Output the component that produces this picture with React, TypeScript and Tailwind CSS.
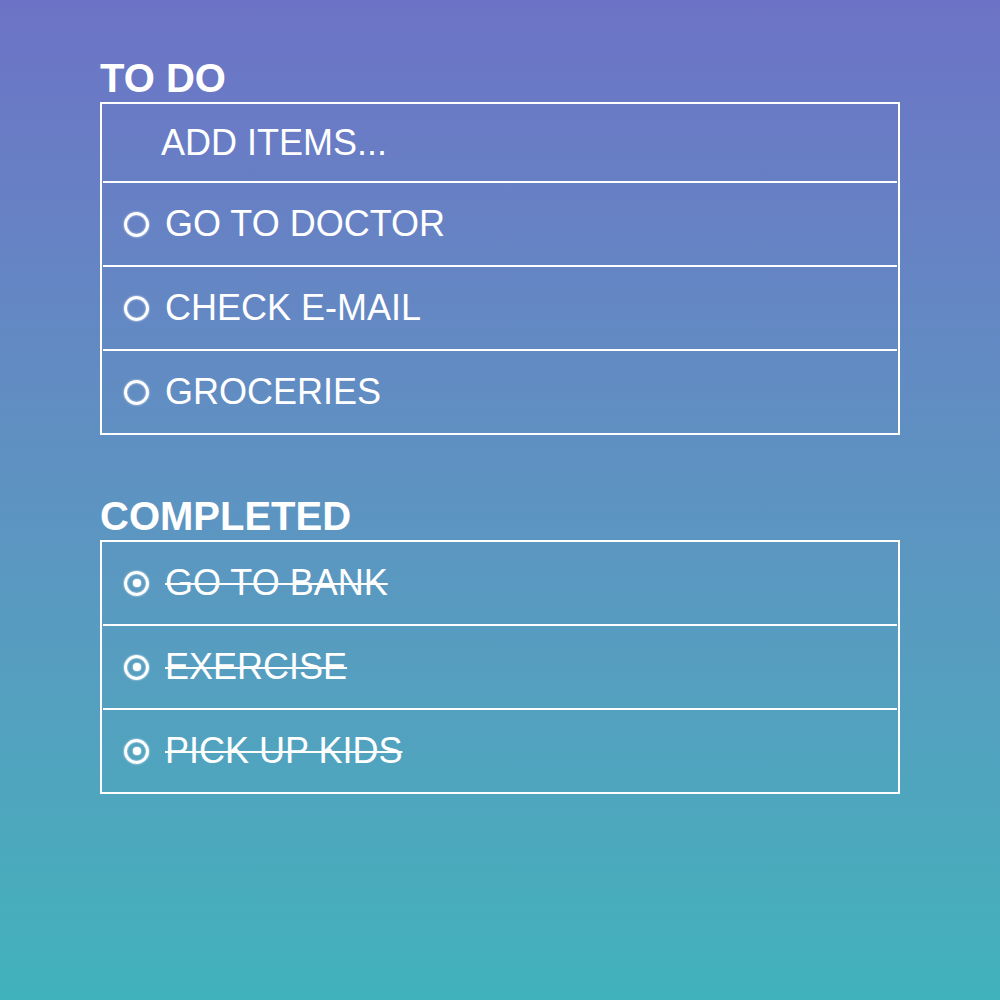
import { twJoin } from 'tailwind-merge';

const todo = ['GO TO DOCTOR', 'CHECK E-MAIL', 'GROCERIES'];
const done = ['GO TO BANK', 'EXERCISE', 'PICK UP KIDS'];

function Radio({ checked }: { checked?: boolean }) {
  return (
    <span
      className={twJoin(
        'flex size-[25px] shrink-0 items-center justify-center rounded-full',
        'border-[3px] border-white shadow-[0_0_2px_rgba(255,255,255,0.9),inset_0_0_2px_rgba(255,255,255,0.8)]',
      )}
    >
      {checked && <span className="size-[8px] rounded-full bg-white shadow-[0_0_2px_white]" />}
    </span>
  );
}

function Item({ label, checked }: { label: string; checked?: boolean }) {
  return (
    <li className="flex h-[84px] items-center gap-[16px] pl-[21px] last:h-[82px]">
      <Radio checked={checked} />
      <span
        className={twJoin(
          'text-[36px] leading-none text-white',
          checked && 'line-through decoration-2',
        )}
      >
        {label}
      </span>
    </li>
  );
}

export default function App() {
  return (
    <div
      className="min-h-screen bg-linear-to-b from-[#6c73c6] to-[#40b2bb] px-[100px] pt-[58px]"
      style={{ fontFamily: '"Liberation Sans", Arial, sans-serif' }}
    >
      <h2 className="mb-[4px] text-[40px] leading-[40px] font-bold text-white">TO DO</h2>
      <ul className="divide-y-2 divide-white border-2 border-white px-px">
        <li className="flex h-[79px] items-center pl-[58px]">
          <span className="text-[36px] leading-none text-white">ADD ITEMS...</span>
        </li>
        {todo.map((t) => (
          <Item key={t} label={t} />
        ))}
      </ul>

      <h2 className="mt-[61px] mb-[4px] text-[40px] leading-[40px] font-bold text-white">
        COMPLETED
      </h2>
      <ul className="divide-y-2 divide-white border-2 border-white px-px">
        {done.map((t) => (
          <Item key={t} label={t} checked />
        ))}
      </ul>
    </div>
  );
}
